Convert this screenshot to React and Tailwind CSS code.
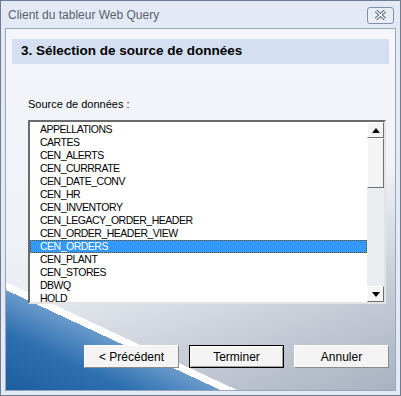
import React from "react";

const items = [
  "APPELLATIONS",
  "CARTES",
  "CEN_ALERTS",
  "CEN_CURRRATE",
  "CEN_DATE_CONV",
  "CEN_HR",
  "CEN_INVENTORY",
  "CEN_LEGACY_ORDER_HEADER",
  "CEN_ORDER_HEADER_VIEW",
  "CEN_ORDERS",
  "CEN_PLANT",
  "CEN_STORES",
  "DBWQ",
  "HOLD",
];

const Btn = ({ children, primary }) => (
  <button
    className={
      "w-[95px] h-[23px] text-[12px] text-black bg-[#f4f4f4] border " +
      (primary
        ? "border-black shadow-[inset_1px_1px_0_#fff,inset_-1px_-1px_0_#a0a0a0]"
        : "border-t-white border-l-white border-r-[#8a8a8a] border-b-[#8a8a8a]")
    }
  >
    {children}
  </button>
);

const ScrollBtn = ({ up }) => (
  <div className="w-[17px] h-[16px] bg-[#f4f4f4] border border-t-white border-l-white border-r-[#6f6f6f] border-b-[#6f6f6f] flex items-center justify-center">
    <svg width="8" height="5" viewBox="0 0 8 5">
      <path d={up ? "M4 0 L8 5 L0 5 Z" : "M0 0 L8 0 L4 5 Z"} fill="#000" />
    </svg>
  </div>
);

export default function App() {
  return (
    <div
      className="w-[401px] h-[396px] flex flex-col border border-[#707d90] bg-[#e4eaf5] overflow-hidden"
      style={{ fontFamily: '"Liberation Sans", Arial, sans-serif' }}
    >
      <div className="h-[27px] flex items-center justify-between pl-[7px] pr-[6px]">
        <div className="text-[12px] text-[#5a616c]">Client du tableur Web Query</div>
        <div className="w-[27px] h-[17px] mt-[1px] rounded-[3px] border border-[#8090a8] bg-[#e8edf6] flex items-center justify-center">
          <svg width="13" height="10" viewBox="0 0 13 10">
            <path d="M2 1 L11 9 M11 1 L2 9" stroke="#5a6372" strokeWidth="3.4" />
            <path d="M2 1 L11 9 M11 1 L2 9" stroke="#ffffff" strokeWidth="1.4" />
          </svg>
        </div>
      </div>
      {/* page backdrop: white streak + blue swoosh in the lower left, grey fade on the right */}
      <div className="flex-1 mx-[4px] mb-[4px] border border-[#9aa6b8] flex flex-col bg-[linear-gradient(205deg,transparent_394px,#ffffff_394px,#ffffff_401px,#6a9acb_401px,#2d6fb0_440px,#1c5e9e_492px),linear-gradient(160deg,transparent_260px,#c8ced8_370px,#a9b2c1_472px),linear-gradient(180deg,#f4f6fb_0%,#eef1f7_60%,#dfe3ea_100%)]">
        <div className="mt-[10px] mx-[6px] h-[25px] bg-[#d4dff1] flex items-center pl-[9px]">
          <span className="text-[13.5px] font-bold text-black">3. Sélection de source de données</span>
        </div>
        <div className="mt-[33px] ml-[22px] text-[11px] text-black leading-[14px]">Source de données :</div>
        <div className="mt-[9px] ml-[22px] w-[358px] h-[184px] bg-white border-2 border-t-[#6a6a6a] border-l-[#6a6a6a] border-r-[#e3e3e3] border-b-[#e3e3e3] flex">
          <div className="flex-1 flex flex-col pt-[1px]">
            {items.map((it) => (
              <div
                key={it}
                className={
                  "h-[13px] leading-[11px] pl-[9px] text-[10.5px] tracking-[-0.5px] " +
                  (it === "CEN_ORDERS"
                    ? "bg-[#3399ff] text-white border border-dotted border-[#6b4a1a]"
                    : "text-black border border-transparent")
                }
              >
                {it}
              </div>
            ))}
          </div>
          <div className="w-[17px] flex flex-col bg-[#f0f0f0]">
            <ScrollBtn up />
            <div className="h-[50px] bg-[#f4f4f4] border border-t-white border-l-white border-r-[#6f6f6f] border-b-[#6f6f6f]" />
            <div className="flex-1 bg-[#ecedf0]" />
            <ScrollBtn />
          </div>
        </div>
        <div className="mt-[41px] ml-[78px] flex gap-[10px]">
          <Btn>&lt; Précédent</Btn>
          <Btn primary>Terminer</Btn>
          <Btn>Annuler</Btn>
        </div>
      </div>
    </div>
  );
}
